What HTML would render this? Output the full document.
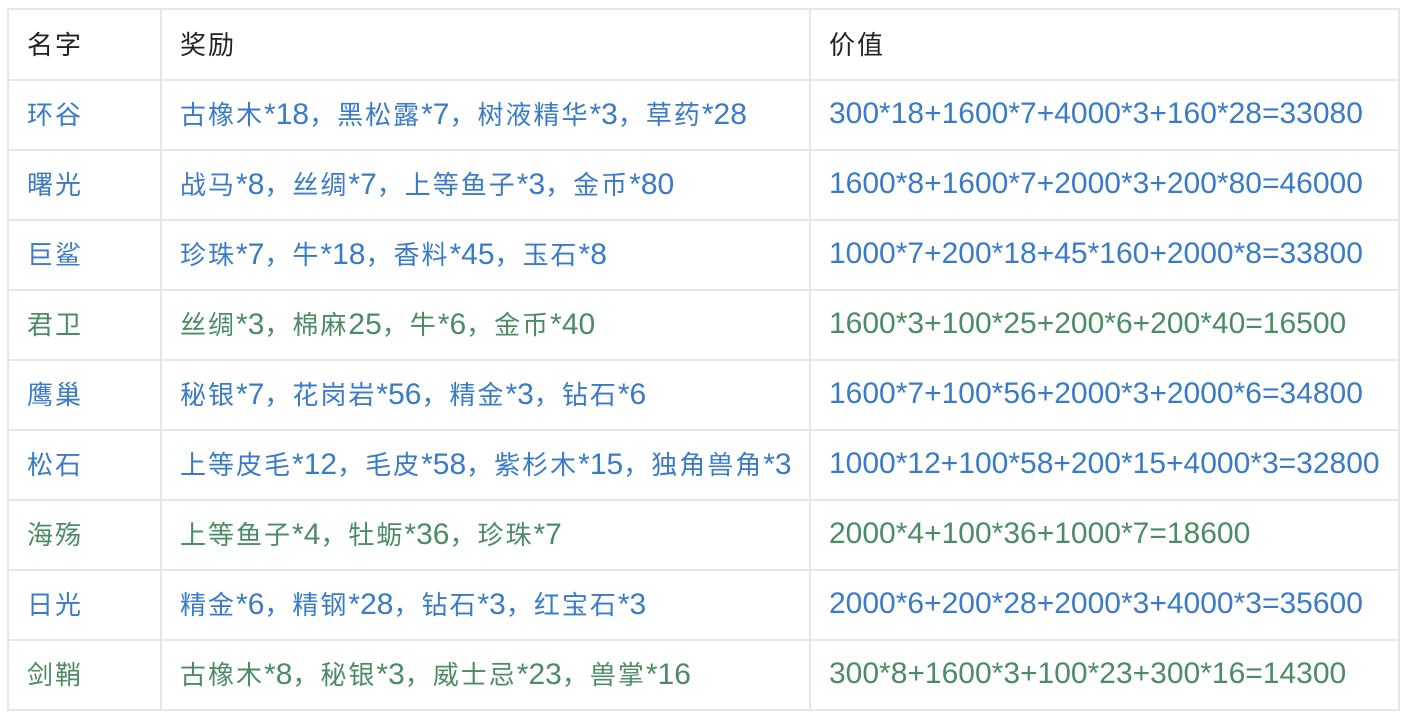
<!DOCTYPE html>
<html><head><meta charset="utf-8"><style>
html,body{margin:0;padding:0;background:#fff;width:1406px;height:716px;overflow:hidden}
table{position:absolute;left:7px;top:8px;border-collapse:collapse;font-family:"Liberation Sans","Noto Sans CJK SC",sans-serif;font-size:26px;letter-spacing:2px}
td{border:2px solid #e6e6e6;height:70px;padding:0 0 3px 18px;box-sizing:border-box;white-space:nowrap;vertical-align:middle}
td:nth-child(3){font-size:30px;letter-spacing:0}
tr:first-child td{height:71px;color:#222}
tr:first-child td:nth-child(3){font-size:26px;letter-spacing:2px}
.b td{color:#3a7bc8}.g td{color:#4b8c64}
td i{font-style:normal;font-family:"Liberation Sans",sans-serif;font-size:30px;letter-spacing:0}
</style></head><body>
<table>
<colgroup><col style="width:153px"><col style="width:649px"><col style="width:589px"></colgroup>
<tr><td>名字</td><td>奖励</td><td>价值</td></tr>
<tr class="b"><td>环谷</td><td>古橡木<i>*18</i>，黑松露<i>*7</i>，树液精华<i>*3</i>，草药<i>*28</i></td><td>300*18+1600*7+4000*3+160*28=33080</td></tr>
<tr class="b"><td>曙光</td><td>战马<i>*8</i>，丝绸<i>*7</i>，上等鱼子<i>*3</i>，金币<i>*80</i></td><td>1600*8+1600*7+2000*3+200*80=46000</td></tr>
<tr class="b"><td>巨鲨</td><td>珍珠<i>*7</i>，牛<i>*18</i>，香料<i>*45</i>，玉石<i>*8</i></td><td>1000*7+200*18+45*160+2000*8=33800</td></tr>
<tr class="g"><td>君卫</td><td>丝绸<i>*3</i>，棉麻<i>25</i>，牛<i>*6</i>，金币<i>*40</i></td><td>1600*3+100*25+200*6+200*40=16500</td></tr>
<tr class="b"><td>鹰巢</td><td>秘银<i>*7</i>，花岗岩<i>*56</i>，精金<i>*3</i>，钻石<i>*6</i></td><td>1600*7+100*56+2000*3+2000*6=34800</td></tr>
<tr class="b"><td>松石</td><td>上等皮毛<i>*12</i>，毛皮<i>*58</i>，紫杉木<i>*15</i>，独角兽角<i>*3</i></td><td>1000*12+100*58+200*15+4000*3=32800</td></tr>
<tr class="g"><td>海殇</td><td>上等鱼子<i>*4</i>，牡蛎<i>*36</i>，珍珠<i>*7</i></td><td>2000*4+100*36+1000*7=18600</td></tr>
<tr class="b"><td>日光</td><td>精金<i>*6</i>，精钢<i>*28</i>，钻石<i>*3</i>，红宝石<i>*3</i></td><td>2000*6+200*28+2000*3+4000*3=35600</td></tr>
<tr class="g"><td>剑鞘</td><td>古橡木<i>*8</i>，秘银<i>*3</i>，威士忌<i>*23</i>，兽掌<i>*16</i></td><td>300*8+1600*3+100*23+300*16=14300</td></tr>
</table>
</body></html>
